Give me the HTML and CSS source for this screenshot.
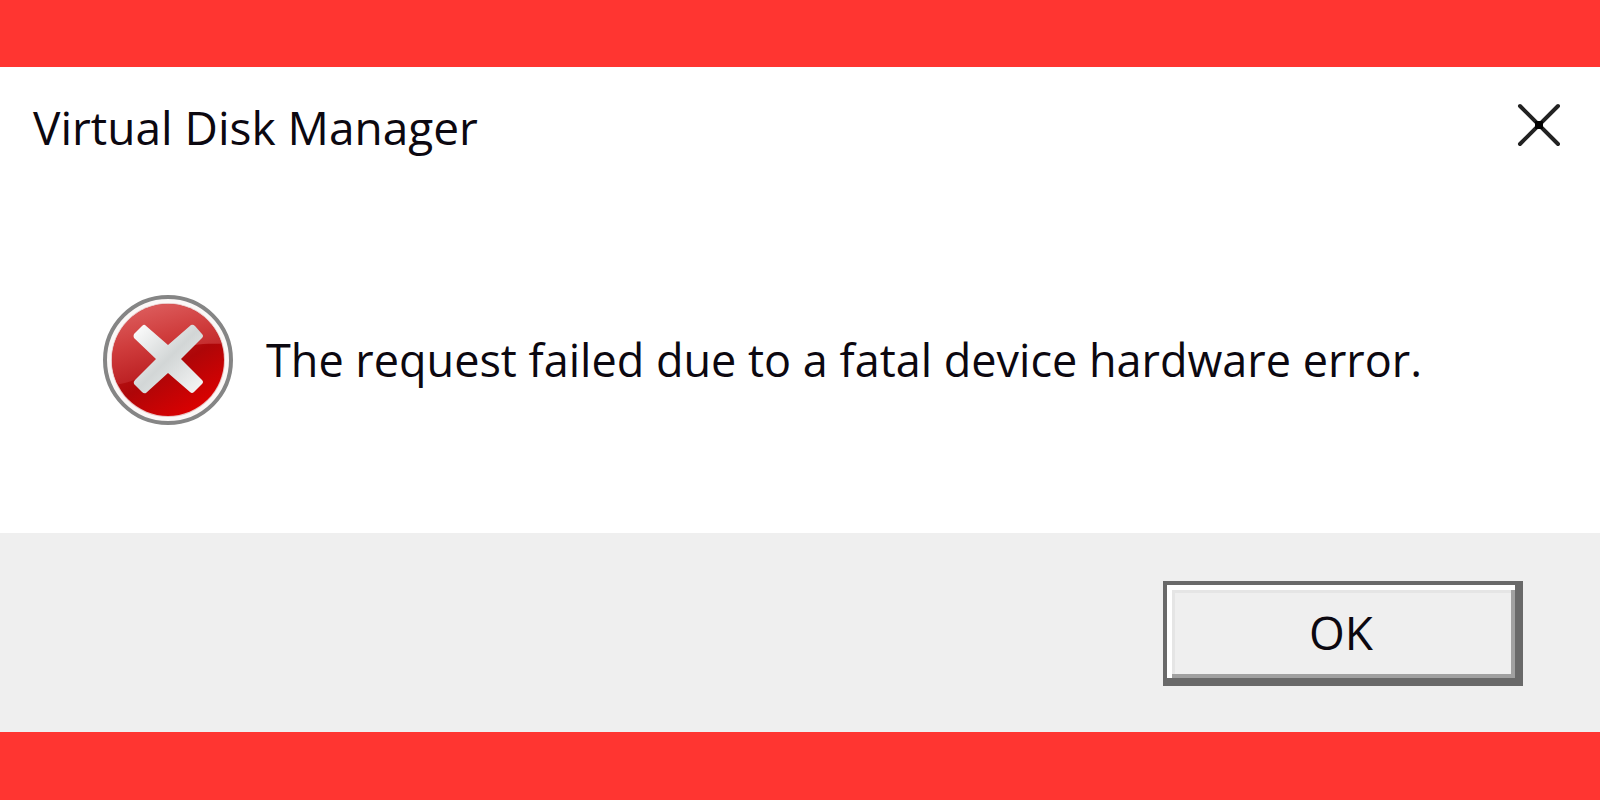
FILE: index.html
```
<!DOCTYPE html>
<html lang="en">
<head>
  <meta charset="UTF-8">
  <meta name="viewport" content="width=device-width, initial-scale=1.0">
  <title>Virtual Disk Manager</title>
  <link rel="stylesheet" href="styles.css">
</head>
<body>
  <main class="dialog" role="alertdialog" aria-labelledby="dialogTitle" aria-describedby="dialogMessage">
    <header class="title-bar">
      <h1 id="dialogTitle">Virtual Disk Manager</h1>
      <button class="close-btn" aria-label="Close">
        <svg width="44" height="44" viewBox="0 0 44 44" fill="none" stroke="#222" stroke-width="4" stroke-linecap="round">
          <path d="M3 3L41 41M41 3L3 41"/>
          <rect x="18" y="18" width="8" height="8" rx="1" fill="#000" stroke="none"/>
        </svg>
      </button>
    </header>

    <div class="dialog-body">
      <svg class="error-icon" width="132" height="132" viewBox="0 0 132 132" aria-hidden="true">
        <defs>
          <linearGradient id="base" x1="0.2" y1="0.1" x2="0.75" y2="1">
            <stop offset="0" stop-color="#c02a2a"/>
            <stop offset="0.55" stop-color="#ae0608"/>
            <stop offset="1" stop-color="#e00000"/>
          </linearGradient>
          <linearGradient id="gloss" x1="0.2" y1="0" x2="0.6" y2="1">
            <stop offset="0" stop-color="#e26a6a"/>
            <stop offset="0.5" stop-color="#cf3c3c"/>
            <stop offset="1" stop-color="#b41418"/>
          </linearGradient>
          <linearGradient id="cross" x1="0" y1="0" x2="1" y2="1">
            <stop offset="0" stop-color="#ffffff"/>
            <stop offset="0.5" stop-color="#d2d6d6"/>
            <stop offset="1" stop-color="#f8f8f8"/>
          </linearGradient>
          <clipPath id="disc">
            <circle cx="66" cy="66" r="56"/>
          </clipPath>
        </defs>
        <circle cx="66" cy="66" r="63" fill="#fbf8f7" stroke="#858585" stroke-width="4"/>
        <circle cx="66" cy="66" r="57" fill="#e9c4c4"/>
        <circle cx="66" cy="66" r="56" fill="url(#base)"/>
        <path clip-path="url(#disc)" fill="url(#gloss)" d="M0 0H132V50C112 50 92 47 73 58C52 68 47 87 12 91H0Z"/>
        <path fill="url(#cross)" d="M43 31L66 51L89 31Q91 30 93 32L100 40Q102 42 100 44L79 65L100 86Q102 88 100 90L92 98Q90 100 88 98L66 79L44 99Q42 100 40 98L32 90Q31 88 33 86L54 65L32 44Q31 42 32 40L40 32Q42 30 43 31Z"/>
      </svg>
      <p id="dialogMessage">The request failed due to a fatal device hardware error.</p>
    </div>

    <footer class="dialog-footer">
      <button class="ok-btn" autofocus>OK</button>
    </footer>
  </main>
</body>
</html>
```
FILE: styles.css
```
:root {
  --backdrop: #ff3531;
  --face: #efefef;
  --frame: #696969;
  --text: #0c0810;
}
* {
  box-sizing: border-box;
  margin: 0;
  padding: 0;
}
body {
  min-height: 100vh;
  padding: 67px 0 68px;
  display: flex;
  font-family: 'Open Sans', 'Segoe UI', sans-serif;
  font-size: 46px;
  line-height: 64px;
  color: var(--text);
  background-color: var(--backdrop);
}
button {
  font: inherit;
  color: inherit;
  cursor: pointer;
}
.dialog {
  flex: 1;
  display: flex;
  flex-direction: column;
  background-color: #fff;
}
.title-bar {
  display: flex;
  justify-content: space-between;
  align-items: center;
  height: 120px;
  padding: 0 39px 0 33px;
}
.title-bar h1 {
  font-size: inherit;
  font-weight: 400;
}
.close-btn {
  display: flex;
  padding-bottom: 4px;
  background: none;
  border: none;
}
.dialog-body {
  flex: 1;
  display: flex;
  align-items: center;
  gap: 32px;
  padding: 0 32px 0 102px;
}
.dialog-body p {
  font-size: 45px;
}
.error-icon {
  flex: none;
}
.dialog-footer {
  display: flex;
  justify-content: flex-end;
  padding: 48px 77px 46px;
  background-color: var(--face);
}
.ok-btn {
  width: 360px;
  height: 105px;
  background-color: var(--face);
  border: solid var(--frame);
  border-width: 4px 8px 8px 4px;
  box-shadow: inset 5px 5px #fff, inset -4px -4px #a0a0a0, inset 8px 8px #e5e5e5;
  outline: none;
}
```
